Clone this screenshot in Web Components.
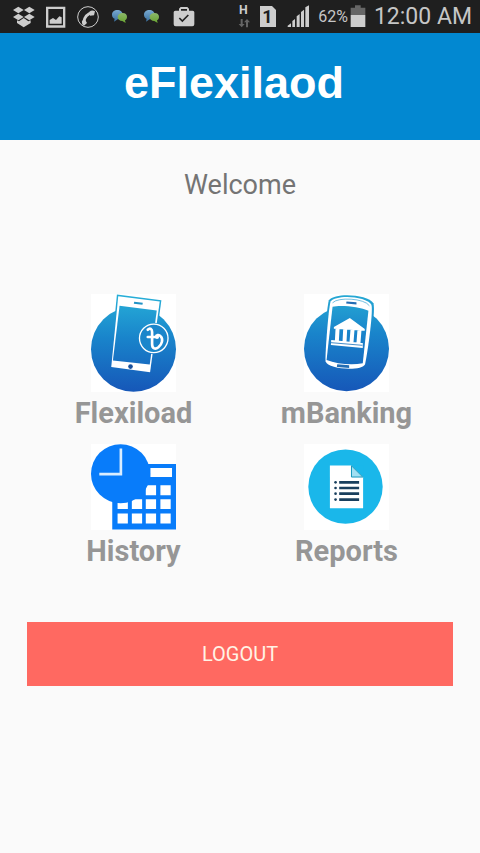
<!DOCTYPE html>
<html lang="en">
<head>
<meta charset="utf-8">
<meta name="viewport" content="width=device-width, initial-scale=1">
<title>eFlexilaod</title>
<style>
html, body { height: 100%; }
body { margin: 0; background: #fafafa; font-family: Roboto, "Liberation Sans", sans-serif; }
</style>
</head>
<body>
<flexi-app></flexi-app>

<template id="t-status">
<style>
:host { display: flex; justify-content: space-between; height: 33px; padding: 0 8px 0 12px; background: #1f1f1f; color: #c6c6c6; }
.group { display: flex; align-items: center; gap: 8px; }
svg { display: block; height: 33px; fill: #cdcdcd; flex: none; }
.power { display: flex; align-items: center; gap: 2px; }
.pct { font-size: 16px; line-height: 34px; }
.time { font-size: 23px; line-height: 34px; }
text { font-family: Roboto, "Liberation Sans", sans-serif; font-weight: 700; }
</style>
<div class="group">
  <svg width="24" viewBox="36 0 72 99"><path d="M55 20l16 10-16 10-16-10zM88 20l16 10-16 10-16-10zM55 41l16 10-16 10-16-10zM88 41l16 10-16 10-16-10zM71 54l14 10 7-3v8l-21 13-20-13v-8l6 3z"/></svg>
  <svg width="24" viewBox="132 0 72 99"><path fill-rule="evenodd" d="M138 20h58v63h-58zM145 27v49h44V27z"/><path d="M149 71V60l10-6 9 6 10-11 7 3v19z"/></svg>
  <svg width="24" viewBox="228 0 72 99"><circle cx="264" cy="51" r="31" fill="none" stroke="#cdcdcd" stroke-width="3"/><path d="M251 66C254 50 262 41 277 38" fill="none" stroke="#cdcdcd" stroke-width="8"/><path d="M246 62l10-2 5 9-9 8c-5-2-7-8-6-15zM268 35c6-4 11-4 17-1l-3 12-12 1z"/></svg>
  <svg width="24" viewBox="324 0 72 99"><defs><linearGradient id="b" x2="0" y2="1"><stop stop-color="#78a9d0"/><stop offset="1" stop-color="#396f9e"/></linearGradient><linearGradient id="g" x2="0" y2="1"><stop stop-color="#8cb86b"/><stop offset="1" stop-color="#67a32f"/></linearGradient></defs><path fill="url(#b)" d="M352 30c9 0 16 6 16 14s-7 14-15 14l-11 7 2-9c-5-2-8-6-8-12 0-8 7-14 16-14z"/><path fill="url(#g)" d="M368 39c8 0 13 5 13 11 0 5-2 9-6 11l2 8-10-6c-8 0-14-5-14-12s7-12 15-12z"/></svg>
  <svg width="24" viewBox="324 0 72 99"><path fill="url(#b)" d="M352 30c9 0 16 6 16 14s-7 14-15 14l-11 7 2-9c-5-2-8-6-8-12 0-8 7-14 16-14z"/><path fill="url(#g)" d="M368 39c8 0 13 5 13 11 0 5-2 9-6 11l2 8-10-6c-8 0-14-5-14-12s7-12 15-12z"/></svg>
  <svg width="24" viewBox="516 0 72 99"><path fill-rule="evenodd" d="M537 32v-6l5-5h20l5 5v6h11q5 0 5 5v36q0 6-6 6h-50q-6 0-6-6V37q0-5 5-5zM543 32h18v-5h-18z"/><path d="M538 54l9 9 18-18" fill="none" stroke="#222" stroke-width="5"/></svg>
</div>
<div class="group">
  <svg width="12" viewBox="20 0 36 99"><text x="23" y="42" font-size="37">H</text><path fill="#656565" d="M28 57h6v15h6l-9 10-9-10h6zM44 82h6V67h6l-9-10-9 10h6z"/></svg>
  <svg width="20" viewBox="81 0 60 99"><path d="M87 18h36l12 12v51H87z"/><text x="94" y="69" font-size="54" fill="#1f1f1f">1</text></svg>
  <svg width="24" viewBox="165 0 72 99"><path d="M170 81v-4l10-7v11zM184 81V63l8-6v24zM197 81V49l9-7v39zM210 81V36l9-7v52zM223 81V22l11-6v65z"/></svg>
  <div class="power"><span class="pct">62%</span>
  <svg width="16" viewBox="356 0 48 99"><path fill="#666" d="M371 16h17v7h14v22h-44V23h13z"/><path d="M358 45h44v36h-44z"/></svg></div>
  <span class="time">12:00 AM</span>
</div>
</template>

<template id="t-header">
<style>
:host { display: block; background: #0288d1; color: #fff; padding: 24px 28px 31px 16px; text-align: center; }
h1 { margin: 0; font: 700 45px/52px "Liberation Sans", Arial, sans-serif; }
</style>
<h1><slot></slot></h1>
</template>

<template id="t-tile">
<style>
:host { display: block; }
button { display: flex; flex-direction: column; align-items: center; width: 100%; padding: 0; border: 0; background: none; font: 700 29px/42px Roboto, "Liberation Sans", sans-serif; color: #969696; cursor: pointer; }
::slotted(svg) { display: block; background: #fff; }
</style>
<button type="button"><slot name="icon"></slot><slot></slot></button>
</template>

<template id="t-logout">
<style>
:host { display: block; }
button { display: block; width: 100%; padding: 20px 16px; border: 0; background: #ff6961; color: #fff3e6; font: 400 20px/24px Roboto, "Liberation Sans", sans-serif; text-transform: uppercase; cursor: pointer; }
</style>
<button type="button"><slot></slot></button>
</template>

<template id="t-app">
<style>
:host { display: flex; flex-direction: column; min-height: 100%; }
main { padding: 28px 27px; }
h2 { margin: 0; font-size: 27px; line-height: 34px; font-weight: 400; color: #747474; text-align: center; }
.grid { display: grid; grid-template-columns: 1fr 1fr; row-gap: 10px; margin: 92px 0 50px; }
</style>
<status-bar></status-bar>
<app-header>eFlexilaod</app-header>
<main>
<h2>Welcome</h2>
<div class="grid">
<menu-tile>
  <svg slot="icon" width="85" height="98" viewBox="32 30 256 294">
    <defs><linearGradient id="f" gradientUnits="userSpaceOnUse" x1="0" y1="30" x2="0" y2="324"><stop stop-color="#27b0d8"/><stop offset=".45" stop-color="#1984cb"/><stop offset="1" stop-color="#1657b8"/></linearGradient></defs>
    <circle cx="160" cy="196" r="128" fill="url(#f)"/>
    <path d="M110 31L244 48 214 269 89 253z" fill="url(#f)"/>
    <path d="M114 36L239 52 210 265 93 249z" fill="#fff"/>
    <path d="M118 65L230 79 209 242 98 230z" fill="url(#f)"/>
    <path d="M162 53l26 3-1 6-26-3z" fill="#2193c6"/><circle cx="151" cy="248" r="7" fill="#174f9b"/>
    <circle cx="221" cy="163" r="47" fill="url(#f)"/><circle cx="221" cy="163" r="43" fill="#1b86cb" stroke="#fff" stroke-width="4"/>
    <path d="M203 137c7-7 13-2 13 7v36c0 15 10 17 19 10 11-9 15-25 7-33-6-7-14-4-14 2M203 159h24" fill="none" stroke="#fff" stroke-width="8" stroke-linecap="round"/><circle cx="231" cy="159" r="6" fill="#fff"/>
  </svg>Flexiload</menu-tile>
<menu-tile>
  <svg slot="icon" width="85" height="98" viewBox="42 28 256 294">
    <defs><linearGradient id="m" gradientUnits="userSpaceOnUse" x1="0" y1="30" x2="0" y2="322"><stop stop-color="#26a9d4"/><stop offset=".4" stop-color="#1984cb"/><stop offset="1" stop-color="#1657b8"/></linearGradient></defs>
    <circle cx="170" cy="192" r="128" fill="url(#m)"/>
    <path d="M117 46C135 22 235 28 251 55c7 18-10 143-20 190-10 26-122 20-129-12-2-18 7-160 15-187z" fill="url(#m)"/>
    <path d="M122 50C137 28 231 33 245 60c6 16-10 136-19 179-9 22-113 16-119-9-2-16 8-155 15-180z" fill="#fff"/>
    <path d="M128 66C150 60 210 65 236 78L219 236C185 242 140 238 110 226z" fill="url(#m)"/>
    <path d="M128 54C143 36 225 40 239 63" fill="none" stroke="#2a9fd2" stroke-width="2"/>
    <path d="M170 50l30 2v7l-31-3zM142 239l36 3v8l-37-3z" fill="#236db4"/>
    <path d="M132 127l48-27 45 33v5l-93-6zM137 131l12 1-2 38-12-1zM160 133l12 1-2 38-12-1zM182 135l12 1-3 38-12-1zM203 136l12 1-3 39-12-1zM124 166l95 9v15l-96-9z" fill="#fff"/><path d="M123 174l95 8" stroke="#458dc8" stroke-width="3"/>
  </svg>mBanking</menu-tile>
<menu-tile>
  <svg slot="icon" width="85" height="86" viewBox="32 27 256 258">
    <path d="M96 87h192v197H96z" fill="#087cfa"/>
    <path d="M211 99h65v27h-65zM197 151h31v30h-31zM241 151h31v30h-31zM112 193h31v29h-31zM155 193h31v29h-31zM197 193h31v29h-31zM241 193h31v29h-31zM112 236h31v30h-31zM155 236h31v30h-31zM197 236h31v30h-31zM241 236h31v30h-31z" fill="#fff"/>
    <circle cx="121" cy="116" r="89" fill="#087cfa"/><path d="M122 40v77H57" fill="none" stroke="#d9edff" stroke-width="8"/>
  </svg>History</menu-tile>
<menu-tile>
  <svg slot="icon" width="85" height="86" viewBox="42 27 256 258">
    <circle cx="167" cy="155" r="112" fill="#1ab7ea"/>
    <path d="M120 91h65l35 35v94H120z" fill="#fff"/><path d="M185 92v34h34z" fill="#a1dff2" stroke="#1597bc" stroke-width="3"/><path d="M190 92l30 30V92z" fill="#1ab7ea"/>
    <path d="M148 142h60M148 159h60M148 176h60M148 194h60" stroke="#193f5d" stroke-width="8"/>
    <g fill="#193f5d"><circle cx="137" cy="142" r="4"/><circle cx="137" cy="159" r="4"/><circle cx="137" cy="176" r="4"/><circle cx="137" cy="194" r="4"/></g>
  </svg>Reports</menu-tile>
</div>
<logout-button>Logout</logout-button>
</main>
</template>

<script>
const define = (name, id) => customElements.define(name, class extends HTMLElement {
  constructor() {
    super();
    this.attachShadow({ mode: "open" }).append(document.getElementById(id).content.cloneNode(true));
  }
});
define("status-bar", "t-status");
define("app-header", "t-header");
define("menu-tile", "t-tile");
define("logout-button", "t-logout");
define("flexi-app", "t-app");
</script>
</body>
</html>
